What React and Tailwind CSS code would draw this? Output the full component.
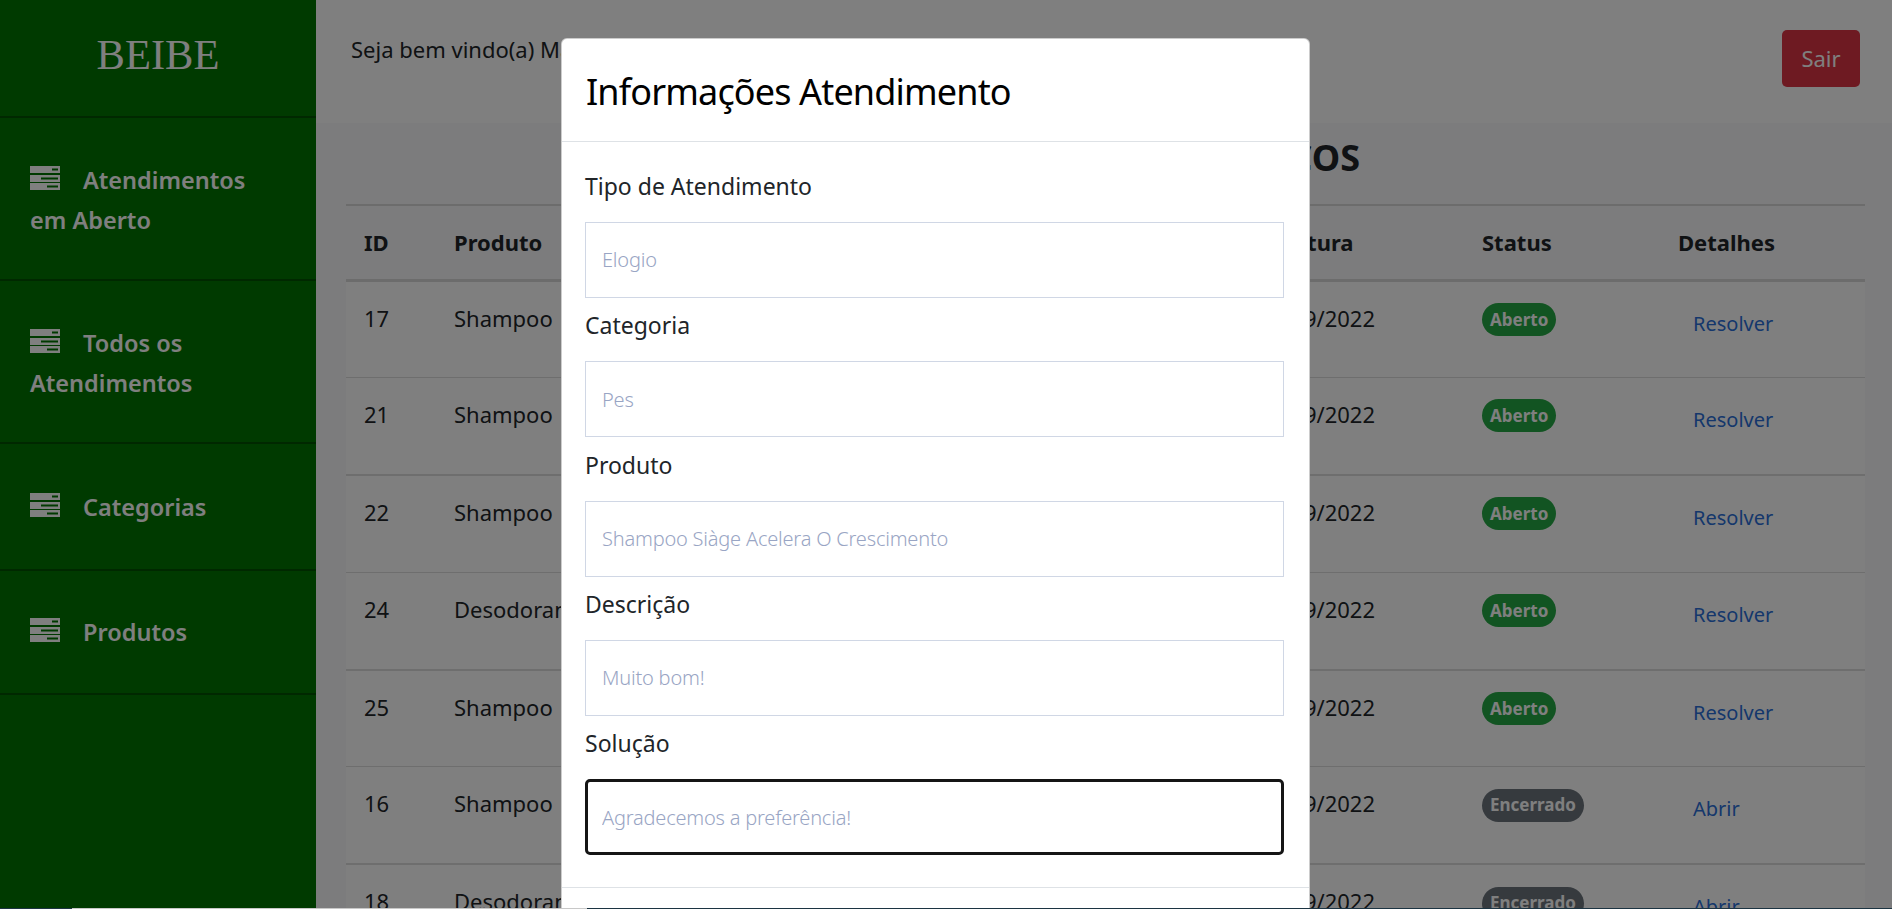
import React from 'react';

const menu = [
  { label: 'Atendimentos em Aberto', height: 'h-[163px]', align: 'pt-[42px]' },
  { label: 'Todos os Atendimentos', height: 'h-[163px]', align: 'pt-[42px]' },
  { label: 'Categorias', height: 'h-[127px]', align: 'pt-[43px]' },
  { label: 'Produtos', height: 'h-[124px]', align: 'pt-[41px]' },
];

const rows = [
  { id: 17, produto: 'Shampoo Siàge Acelera O Crescimento', data: '12/09/2022', status: 'Aberto', link: 'Resolver' },
  { id: 21, produto: 'Shampoo Siàge Acelera O Crescimento', data: '12/09/2022', status: 'Aberto', link: 'Resolver' },
  { id: 22, produto: 'Shampoo Siàge Acelera O Crescimento', data: '12/09/2022', status: 'Aberto', link: 'Resolver' },
  { id: 24, produto: 'Desodorante Nativa Spa', data: '12/09/2022', status: 'Aberto', link: 'Resolver' },
  { id: 25, produto: 'Shampoo Siàge Acelera O Crescimento', data: '12/09/2022', status: 'Aberto', link: 'Resolver' },
  { id: 16, produto: 'Shampoo Siàge Acelera O Crescimento', data: '12/09/2022', status: 'Encerrado', link: 'Abrir' },
  { id: 18, produto: 'Desodorante Nativa Spa', data: '12/09/2022', status: 'Encerrado', link: 'Abrir' },
];

const fields = [
  { label: 'Tipo de Atendimento', value: 'Elogio' },
  { label: 'Categoria', value: 'Pes' },
  { label: 'Produto', value: 'Shampoo Siàge Acelera O Crescimento' },
  { label: 'Descrição', value: 'Muito bom!' },
  { label: 'Solução', value: 'Agradecemos a preferência!', focused: true },
];

function ServerIcon() {
  return (
    <svg width="30" height="24" viewBox="0 0 30 24" className="inline-block align-[-1px] mr-[23px]">
      <rect x="0" y="0" width="30" height="7" fill="#ffffff" />
      <rect x="22" y="2.5" width="6" height="2" fill="#007400" />
      <rect x="0" y="9" width="30" height="7" fill="#ffffff" />
      <rect x="11" y="11.5" width="17" height="2" fill="#007400" />
      <rect x="0" y="17" width="30" height="7" fill="#ffffff" />
      <rect x="17" y="19.5" width="11" height="2" fill="#007400" />
    </svg>
  );
}

function Sidebar() {
  return (
    <aside className="w-[316px] shrink-0 bg-[#007400] text-white">
      <div className="h-[118px] flex justify-center pt-[30px] border-b-2 border-[#005000]">
        <span className="font-['Liberation_Serif',serif] text-[42.5px] leading-[50px]">BEIBE</span>
      </div>
      {menu.map((item) => (
        <div key={item.label} className={`${item.height} ${item.align} px-[30px] border-b-2 border-[#005000] text-[23.5px] leading-[40px] font-semibold`}>
          <ServerIcon />
          <span>{item.label}</span>
        </div>
      ))}
    </aside>
  );
}

function Badge({ status }) {
  const color = status === 'Aberto' ? 'bg-[#25a844]' : 'bg-[#6c757d]';
  return (
    <span className={`inline-flex items-center h-[33px] px-[8px] rounded-full text-white text-[17px] font-bold ${color}`}>
      {status}
    </span>
  );
}

function Table() {
  return (
    <table className="w-full table-fixed text-[#212529] text-[22px]">
      <colgroup>
        <col className="w-[90px]" />
        <col className="w-[801px]" />
        <col className="w-[227px]" />
        <col className="w-[196px]" />
        <col />
      </colgroup>
      <thead>
        <tr className="h-[75px] border-t-2 border-b-[3px] border-[#d8d8d8] text-left">
          <th className="pl-[18px] font-bold">ID</th>
          <th className="pl-[18px] font-bold">Produto</th>
          <th className="pl-[18px] font-bold">Abertura</th>
          <th className="pl-[18px] font-bold">Status</th>
          <th className="pl-[18px] font-bold">Detalhes</th>
        </tr>
      </thead>
      <tbody className="bg-white">
        {rows.map((row, i) => (
          <tr key={row.id} className={`h-[97.4px] border-[#dcdcdc] align-top ${i % 2 === 0 ? 'border-b' : 'border-b-2'}`}>
            <td className="pl-[18px] pt-[20px]">{row.id}</td>
            <td className="pl-[18px] pt-[20px] whitespace-nowrap [word-spacing:6px]">{row.produto}</td>
            <td className="pl-[21px] pt-[20px]">{row.data}</td>
            <td className="pl-[18px] pt-[19px]"><Badge status={row.status} /></td>
            <td className="pl-[33px] pt-[27px] text-[20px] text-[#2b6fd8]">{row.link}</td>
          </tr>
        ))}
      </tbody>
    </table>
  );
}

function Modal() {
  return (
    <div className="w-[749px] h-[900px] bg-white rounded-[6px] border border-black/20">
      <div className="h-[103px] pl-[24px] pt-[4px] flex items-center border-b border-[#dee2e6]">
        <h5 className="text-[36px] tracking-[-0.85px] text-black">Informações Atendimento</h5>
      </div>
      <div className="pl-[23px] pr-[25px] pt-[16.4px] pb-[32px]">
        {fields.map((field) => (
          <div key={field.label} className="pt-[9.4px]">
            <label className="block h-[36px] mb-[18px] text-[23px] leading-[36px] text-[#212529]">{field.label}</label>
            <input
              readOnly
              placeholder={field.value}
              className={`block w-full h-[76px] text-[20px] tracking-[-0.2px] font-light placeholder:text-[#99a5c4] outline-none ${
                field.focused ? 'pl-[14px] border-[3px] border-[#151515] rounded-[5px]' : 'pl-[16px] border border-[#d0d7e5]'
              }`}
            />
          </div>
        ))}
      </div>
      <div className="border-t border-[#dee2e6]" />
    </div>
  );
}

export default function App() {
  return (
    <div className="h-screen flex flex-col overflow-hidden font-['Noto_Sans',sans-serif]">
      <div className="relative flex-1 flex overflow-hidden">
        <Sidebar />
        <div className="flex-1 min-w-0 bg-[#f8f9fa]">
          <header className="h-[123px] bg-white flex justify-between pl-[35px] pr-[32px] pt-[30px]">
            <span className="text-[22px] leading-[38px] text-[#212529]">Seja bem vindo(a) Maria</span>
            <button className="w-[78px] h-[57px] rounded-[5px] bg-[#dc3545] text-white text-[22px]">Sair</button>
          </header>
          <main className="pl-[30px] pr-[27px]">
            <h2 className="mt-[13px] mb-[24px] h-[44px] pr-[505px] text-right text-[36px] leading-[44px] font-bold text-[#212529]">SERVIÇOS</h2>
            <Table />
          </main>
        </div>
        {/* overlay + modal */}
        <div className="absolute inset-0 bg-black/50 flex justify-center pr-[21px] pt-[38px]">
          <Modal />
        </div>
      </div>
      <div className="h-px shrink-0 flex">
        <div className="w-[72px] bg-[#1c3442]" />
        <div className="w-[515px] bg-[#c8c8c8]" />
        <div className="flex-1 bg-[#1c3442]" />
      </div>
    </div>
  );
}
